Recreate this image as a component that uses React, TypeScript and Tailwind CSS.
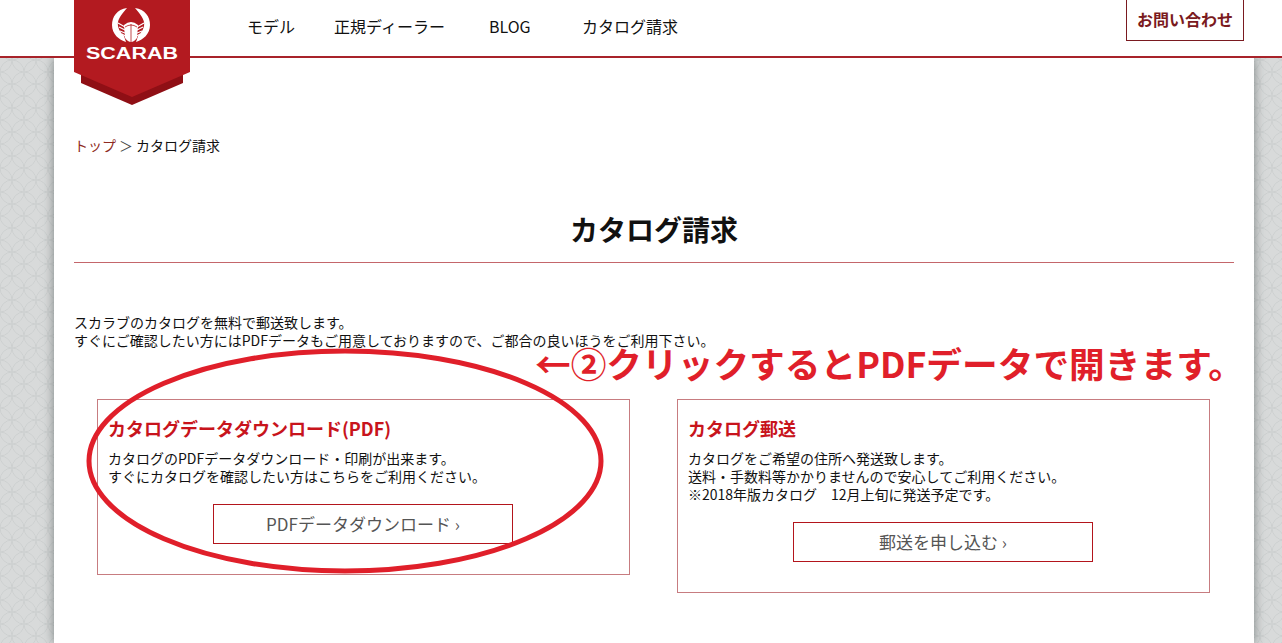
const JP = "font-['Noto_Sans_CJK_JP','Noto_Sans',sans-serif]"

function Logo() {
  return (
    <div className="absolute left-[74px] top-0 z-10 h-[105px] w-[116px]">
      <svg width="116" height="105" viewBox="0 0 116 105">
        <path d="M7 70H109V83L58 105L7 83Z" fill="#8f0f15" />
        <path d="M0 0H116V72L58 97L0 72Z" fill="#b31a20" />
        {[0, 1].map((side) => (
          <g key={side} transform={side ? "matrix(-1 0 0 1 114 0)" : undefined}>
            <path d="M53 8C43 9 38 17 38 25C38 34 45 40 52 42L50 36C46 32 43 27 44 22C45 17 49 13 53 8Z" fill="#fff" />
            <path d="M44 23L51 27M45 27L51 30M46 31L51 33M48 34L51 36" stroke="#fff" strokeWidth="1.2" />
          </g>
        ))}
        <path d="M50 25Q57 19 64 25L63 38Q57 46 51 38Z" fill="#fff" />
        <path d="M57 24V42M51 27Q57 23 63 27" stroke="#b31a20" strokeWidth="0.8" fill="none" />
        <text
          x="12"
          y="59"
          textLength="92"
          lengthAdjust="spacingAndGlyphs"
          fill="#fff"
          fontSize="16"
          fontWeight="700"
          fontFamily="'Liberation Sans', sans-serif"
        >
          SCARAB
        </text>
      </svg>
    </div>
  )
}

function Header() {
  return (
    <header className="relative z-10 h-[58px] border-b-2 border-[#a8232a] bg-white">
      <Logo />
      <nav className="flex h-[52px] items-center pl-[247px] text-[16px] text-[#111]">
        <a className="w-[87px]">モデル</a>
        <a className="w-[155px]">正規ディーラー</a>
        <a className="w-[93px]">BLOG</a>
        <a>カタログ請求</a>
      </nav>
      <a className="absolute right-[38px] top-0 flex h-[41px] w-[118px] items-center justify-center border border-t-0 border-[#7a1a20] pb-[2px] text-[16px] font-bold text-[#7a1a20]">
        お問い合わせ
      </a>
    </header>
  )
}

type CardProps = {
  title: string
  lines: string[]
  button: string
}

function Card({ title, lines, button }: CardProps) {
  return (
    <div className="w-[533px] border border-[#c77c80] px-[10px] pt-[15px] pb-[30px]">
      <h3 className="text-[18px] leading-[27px] font-bold text-[#c8141c]">{title}</h3>
      <div className="mt-[7px] text-[14px] leading-[18px] text-[#111]">
        {lines.map((line) => (
          <p key={line}>{line}</p>
        ))}
      </div>
      <a className="mt-[19px] ml-[105px] flex h-[40px] w-[300px] items-center justify-center border border-[#b3151c] text-[17px] text-[#555]">
        {button}
      </a>
    </div>
  )
}

function Texture() {
  return (
    <svg className="absolute inset-0" width="1282" height="643">
      <defs>
        <pattern id="scales" width="24" height="24" patternUnits="userSpaceOnUse">
          <g fill="none" stroke="#cdd0d0" strokeWidth="1">
            <circle cx="0" cy="12" r="12" />
            <circle cx="24" cy="12" r="12" />
            <circle cx="12" cy="0" r="12" />
            <circle cx="12" cy="24" r="12" />
          </g>
        </pattern>
      </defs>
      <rect width="1282" height="643" fill="#d8dada" />
      <rect width="1282" height="643" fill="url(#scales)" />
    </svg>
  )
}

export default function App() {
  return (
    <div className={`relative h-[643px] overflow-hidden ${JP}`}>
      <Texture />
      <Header />
      <main className="relative ml-[54px] h-[585px] w-[1200px] bg-white px-[20px] shadow-[0_0_10px_rgba(80,90,90,0.7)]">
        <p className="pt-[77px] text-[14px] leading-[20px] text-[#111]">
          <span className="text-[#8e2a22]">トップ</span>
          <span className="ml-[3px] mr-[3px] text-[#444]">＞</span>
          カタログ請求
        </p>
        <h1 className="mt-[55px] border-b border-[#c4666b] pb-[13px] text-center text-[28px] leading-[39px] font-bold text-[#111]">
          カタログ請求
        </h1>
        <div className="mt-[50px] text-[14px] leading-[18px] text-[#111]">
          <p>スカラブのカタログを無料で郵送致します。</p>
          <p>すぐにご確認したい方にはPDFデータもご用意しておりますので、ご都合の良いほうをご利用下さい。</p>
        </div>
        <div className="mt-[50px] flex items-start gap-[47px] px-[23px]">
          <Card
            title="カタログデータダウンロード(PDF)"
            lines={["カタログのPDFデータダウンロード・印刷が出来ます。", "すぐにカタログを確認したい方はこちらをご利用ください。"]}
            button="PDFデータダウンロード ›"
          />
          <Card
            title="カタログ郵送"
            lines={["カタログをご希望の住所へ発送致します。", "送料・手数料等かかりませんので安心してご利用ください。", "※2018年版カタログ　12月上旬に発送予定です。"]}
            button="郵送を申し込む ›"
          />
        </div>
      </main>
      {/* hand-drawn annotation on top of the page */}
      <svg className="absolute left-[85px] top-[346px]" width="520" height="232" viewBox="0 0 520 232">
        <ellipse cx="260" cy="115" rx="256" ry="110" fill="none" stroke="#e01f2a" strokeWidth="5" />
      </svg>
      <div className="absolute left-[535px] top-[339px] text-[35.7px] leading-[48px] font-bold whitespace-nowrap text-[#e01f2a]">
        ←②クリックするとPDFデータで開きます。
      </div>
    </div>
  )
}
